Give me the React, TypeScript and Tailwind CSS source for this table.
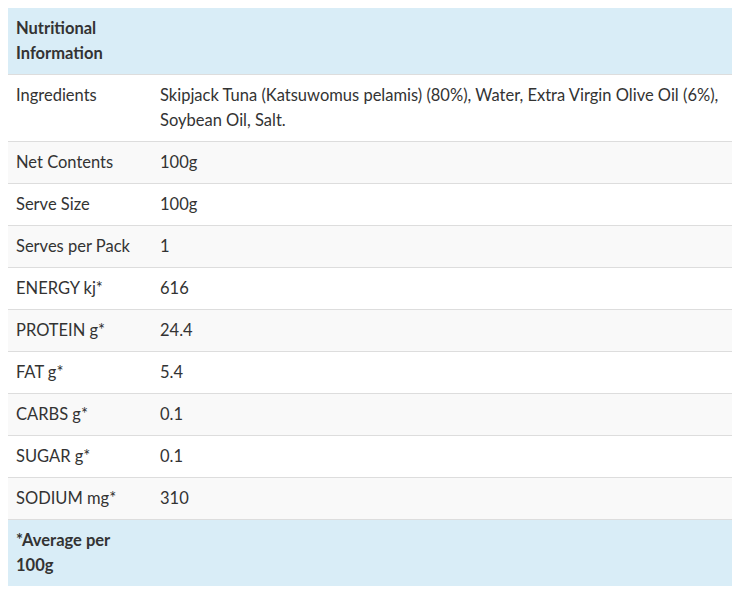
import React from "react";

const rows: [string, string][] = [
  ["Ingredients", "Skipjack Tuna (Katsuwomus pelamis) (80%), Water, Extra Virgin Olive Oil (6%), Soybean Oil, Salt."],
  ["Net Contents", "100g"],
  ["Serve Size", "100g"],
  ["Serves per Pack", "1"],
  ["ENERGY kj*", "616"],
  ["PROTEIN g*", "24.4"],
  ["FAT g*", "5.4"],
  ["CARBS g*", "0.1"],
  ["SUGAR g*", "0.1"],
  ["SODIUM mg*", "310"],
];

export default function App() {
  return (
    <div className="bg-white w-[732px] h-[597px] pt-2 pl-2 text-[#333] text-[16.5px] leading-[25px]" style={{ fontFamily: "Lato, 'Open Sans', sans-serif" }}>
      <div className="w-[724px] flex flex-col">
        <div className="flex bg-[#d9edf7] border-b border-[#dddddd]">
          <div className="w-[144px] shrink-0 p-2 font-bold">Nutritional Information</div>
          <div className="flex-1 p-2"></div>
        </div>
        {rows.map(([k, v], i) => (
          <div key={k} className={`flex border-b border-[#dddddd] ${i % 2 === 1 ? "bg-[#f9f9f9]" : "bg-white"}`}>
            <div className="w-[144px] shrink-0 p-2">{k}</div>
            <div className="flex-1 p-2">{v}</div>
          </div>
        ))}
        <div className="flex bg-[#d9edf7]">
          <div className="w-[144px] shrink-0 p-2 font-bold">*Average per 100g</div>
          <div className="flex-1 p-2"></div>
        </div>
      </div>
    </div>
  );
}
